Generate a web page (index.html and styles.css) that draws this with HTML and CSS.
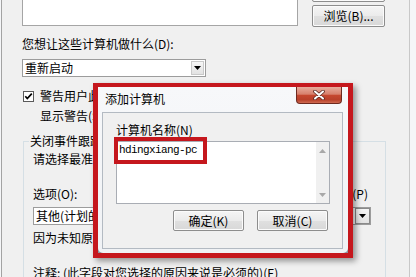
FILE: index.html
```html
<!DOCTYPE html>
<html>
<head>
<meta charset="utf-8">
<link rel="stylesheet" href="styles.css">
</head>
<body>
<div class="screen">
  <div class="window">
    <div class="top-row">
      <div class="listbox"></div>
      <div class="btn-col">
        <div class="btn btn-top">添加(A)...</div>
        <div class="btn btn-browse">浏览(B)...</div>
      </div>
    </div>
    <div class="label">您想让这些计算机做什么(D):</div>
    <div class="combo combo-action">
      <span class="combo-text">重新启动</span>
      <span class="combo-btn"><svg width="7" height="4" viewBox="0 0 7 4"><polygon points="0,0 7,0 3.5,4" fill="#000"/></svg></span>
    </div>
    <div class="check-row">
      <span class="checkbox"><svg width="11" height="11" viewBox="0 0 11 11"><rect x="0.5" y="0.5" width="10" height="10" fill="#fff" stroke="#5a5a5a"/><path d="M2.3 5.2 L4.3 7.5 L8.8 2.6" fill="none" stroke="#000" stroke-width="1.7"/></svg></span>
      <span>警告用户此操作(W)</span>
    </div>
    <div class="indent">显示警告(S) 10 分钟</div>
    <fieldset class="group">
      <legend>关闭事件跟踪程序</legend>
      <div class="prompt">请选择最准确地描述您想关闭这些计算机的原因的选项</div>
      <div class="opt-row"><span>选项(O):</span><span class="planned">计划(P)</span></div>
      <div class="combo combo-reason">
        <span class="combo-text">其他(计划的)</span>
        <span class="combo-btn combo-btn-dark"><svg width="7" height="4" viewBox="0 0 7 4"><polygon points="0,0 7,0 3.5,4" fill="#000"/></svg></span>
      </div>
      <div class="desc">因为未知原因而关闭或重新启动计算机</div>
      <div class="note">注释: (此字段对您选择的原因来说是必须的)(E)</div>
    </fieldset>
  </div>

  <div class="dialog">
    <div class="frame">
      <div class="titlebar">
        <span class="title">添加计算机</span>
        <span class="close"><svg width="12" height="10" viewBox="0 0 12 10"><path d="M2 1.5 L10 8.5 M10 1.5 L2 8.5" stroke="#5a2a22" stroke-width="3.6" stroke-linecap="round"/><path d="M2 1.5 L10 8.5 M10 1.5 L2 8.5" stroke="#fff" stroke-width="2" stroke-linecap="round"/></svg></span>
      </div>
      <div class="client">
        <div class="field-label">计算机名称(N)</div>
        <div class="textarea">
          <div class="ta-text">hdingxiang-pc</div>
          <div class="scrollbar">
            <span class="sb-arrow"><svg width="7" height="4" viewBox="0 0 7 4"><polygon points="0,4 7,4 3.5,0" fill="#a8a8a8"/></svg></span>
            <span class="sb-arrow"><svg width="7" height="4" viewBox="0 0 7 4"><polygon points="0,0 7,0 3.5,4" fill="#a8a8a8"/></svg></span>
          </div>
          <div class="mark"></div>
        </div>
        <div class="buttons">
          <div class="btn dlg-btn">确定(K)</div>
          <div class="btn dlg-btn">取消(C)</div>
        </div>
      </div>
    </div>
  </div>
</div>
</body>
</html>
```
FILE: styles.css
```css
* { box-sizing: border-box; }
html, body { margin: 0; padding: 0; }
body {
  width: 416px;
  height: 277px;
  overflow: hidden;
  background: #f5f6f8;
  font-family: "Noto Sans CJK SC", "Noto Sans", sans-serif;
  font-size: 12px;
  line-height: 14px;
  color: #000;
}
.screen {
  position: relative;
  width: 416px;
  height: 277px;
  display: flex;
}
.window {
  margin-left: 1px;
  width: 409px;
  height: 277px;
  background: #f0f0f0;
  border-left: 1px solid #a3a3a3;
  border-right: 1px solid #c8c8c8;
  padding-left: 20px;
  overflow: hidden;
}
.top-row {
  display: flex;
  align-items: flex-start;
  height: 27px;
}
.listbox {
  width: 276px;
  height: 27px;
  margin-top: -1px;
  background: #fff;
  border: 1px solid #a5a5a5;
}
.btn-col {
  margin-left: 14px;
  width: 73px;
  display: flex;
  flex-direction: column;
}
.btn {
  border: 1px solid #8d8d8d;
  border-radius: 2px;
  background: linear-gradient(#f5f5f5, #ebebeb 50%, #e0e0e0 51%, #d8d8d8);
  box-shadow: inset 0 0 0 1px #fbfbfb;
  display: flex;
  align-items: center;
  justify-content: center;
  font-size: 12px;
}
.btn-top { height: 22px; margin-top: -20px; }
.btn-browse { height: 22px; margin-top: 3px; }
.label { margin-top: 10px; }
.combo {
  display: flex;
  align-items: center;
  height: 18px;
  background: #fff;
  border: 1px solid #9c9c9c;
}
.combo-text { padding-left: 2px; white-space: nowrap; }
.combo-btn {
  margin-left: auto;
  margin-right: 1px;
  width: 13px;
  height: 14px;
  border: 1px solid #c9c9c9;
  background: linear-gradient(#f6f6f6, #e2e2e2);
  display: flex;
  align-items: center;
  justify-content: center;
}
.combo-btn-dark { border-color: #8a8a8a; width: 15px; height: 16px; margin-right: 0; }
.combo-action { width: 184px; margin-top: 8px; }
.check-row {
  display: flex;
  align-items: center;
  gap: 6px;
  height: 14px;
  margin-top: 12px;
  margin-left: 1px;
  white-space: nowrap;
}
.checkbox { width: 11px; height: 11px; display: flex; }
.indent { margin-left: 18px; margin-top: 6px; white-space: nowrap; }
.group {
  margin: 11px 0 0 1px;
  width: 363px;
  min-width: 0;
  border: 1px solid #d5dfe5;
  padding: 0 14px 0 9px;
  height: 200px;
}
.group legend {
  padding: 0 1px;
  margin-left: -4px;
  line-height: 14px;
}
.prompt { margin-top: 4px; white-space: nowrap; }
.opt-row {
  display: flex;
  justify-content: space-between;
  margin-top: 21px;
}
.planned { margin-right: 3px; }
.combo-reason { margin-top: 6px; }
.desc { margin-top: 6px; white-space: nowrap; }
.note { margin-top: 21px; white-space: nowrap; }

/* dialog */
.dialog {
  position: absolute;
  left: 93px;
  top: 83px;
  width: 260px;
  height: 175px;
  border: 5px solid #c5171d;
  border-top-width: 4px;
  background: #8d959e;
  box-shadow: 3px 3px 6px rgba(0, 0, 0, 0.4);
  display: flex;
}
.frame {
  flex: 1;
  display: flex;
  flex-direction: column;
  background: linear-gradient(#f7f8fa, #f0f2f5);
  border-radius: 0 0 5px 5px;
  padding: 0 5px 4px 4px;
}
.titlebar {
  height: 25px;
  display: flex;
  align-items: flex-start;
}
.title { padding: 5px 0 0 3px; }
.close {
  margin-left: auto;
  margin-right: 1px;
  width: 46px;
  height: 17px;
  border: 1px solid #6e2a20;
  border-top: none;
  border-radius: 0 0 4px 4px;
  background: linear-gradient(#e7ab9c, #d7806c 45%, #c5472f 52%, #b8402a 80%, #cf6a52);
  display: flex;
  align-items: center;
  justify-content: center;
}
.client {
  flex: 1;
  border: 1px solid #b3bac2;
  background: #f0f0f0;
  padding: 10px 12px 0 13px;
}
.textarea {
  position: relative;
  margin-top: 4px;
  width: 214px;
  height: 63px;
  background: #fff;
  border: 1px solid #a9adb4;
  display: flex;
}
.ta-text {
  flex: 1;
  padding: 2px 0 0 2px;
  font-family: "Liberation Mono", "DejaVu Sans Mono", monospace;
  font-size: 11px;
  line-height: 12px;
  letter-spacing: -0.6px;
}
.scrollbar {
  width: 13px;
  background: #f0f0f0;
  display: flex;
  flex-direction: column;
  justify-content: space-between;
}
.sb-arrow {
  height: 17px;
  display: flex;
  align-items: center;
  justify-content: center;
}
.mark {
  position: absolute;
  left: -3px;
  top: -5px;
  width: 93px;
  height: 27px;
  border: 4px solid #c5171d;
}
.buttons {
  display: flex;
  justify-content: flex-end;
  gap: 13px;
  margin-top: 6px;
  margin-right: 2px;
}
.dlg-btn { width: 71px; height: 21px; }
```
